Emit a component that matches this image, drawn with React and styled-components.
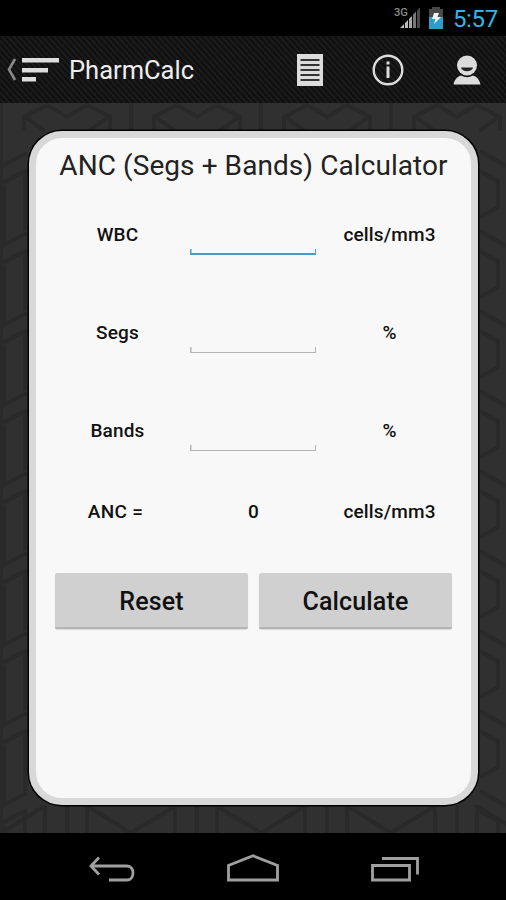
import React, { useState } from "react";
import styled, { createGlobalStyle } from "styled-components";

const colors = {
  holoBlue: "#33b5e5",
  icon: "#dcdcdc",
  nav: "#a0a0a0",
  text: "#111",
  card: "#f8f8f8",
  cardBorder: "#d8d8d8"
};

const GlobalStyle = createGlobalStyle`
  * {
    box-sizing: border-box;
  }
  body {
    margin: 0;
    background: #000;
    font-family: Roboto, "Liberation Sans", sans-serif;
  }
`;

const Screen = styled.div`
  display: flex;
  flex-direction: column;
  width: 506px;
  height: 900px;
  overflow: hidden;
  background: #000;
`;

const StatusBar = styled.div`
  display: flex;
  justify-content: flex-end;
  align-items: center;
  height: 36px;
  padding-right: 8px;
`;

const Clock = styled.span`
  margin-left: 9px;
  font-size: 24px;
  line-height: 36px;
  letter-spacing: -0.3px;
  padding-top: 1px;
  color: ${colors.holoBlue};
`;

const ActionBar = styled.header`
  display: flex;
  align-items: center;
  height: 67px;
  padding: 0 25px 0 5px;
  background: repeating-linear-gradient(
    48deg,
    #0f0f0f 0,
    #111 1.6px,
    #202020 3px,
    #0f0f0f 4.3px
  );
`;

const AppName = styled.h1`
  flex: 1;
  margin: 1px 0 0 10px;
  font-size: 25.5px;
  font-weight: 400;
  color: #eee;
`;

const Actions = styled.div`
  display: flex;
  gap: 49px;
`;

const Body = styled.main`
  position: relative;
  height: 730px;
  padding: 28px 28px 28px 29px;
  background: #303030;
`;

const Backdrop = styled.svg`
  position: absolute;
  top: 0;
  left: 0;
`;

const Card = styled.section`
  position: relative;
  height: 674px;
  padding: 0 13px;
  border: 7px solid ${colors.cardBorder};
  border-radius: 33px;
  background: ${colors.card};
  box-shadow: 0 0 0 1.5px #000;
  color: ${colors.text};
`;

const Title = styled.h2`
  margin: 0;
  height: 47px;
  line-height: 55px;
  text-align: center;
  white-space: nowrap;
  font-size: 28px;
  font-weight: 400;
  letter-spacing: 0.07px;
  color: #222;
`;

const Row = styled.div`
  display: grid;
  grid-template-columns: repeat(3, 136px);
  justify-content: center;
  align-items: center;
  justify-items: center;
  height: ${props => props.$height}px;
  font-size: 19px;
  font-weight: 500;
  letter-spacing: 0.15px;
`;

const ResultLabel = styled.span`
  margin-right: 4px;
  letter-spacing: 0.3px;
`;

const Field = styled.input`
  width: 126px;
  height: 40px;
  padding: 0 8px 6px;
  border: 0;
  outline: 0;
  font: inherit;
  text-align: center;
  background: linear-gradient(${props => props.$line}, ${props => props.$line}) 0
      100% / 100% ${props => props.$weight}px no-repeat,
    linear-gradient(${props => props.$line}, ${props => props.$line}) 0 100% /
      1.5px 6px no-repeat,
    linear-gradient(${props => props.$line}, ${props => props.$line}) 100% 100% /
      1.5px 6px no-repeat;
  margin: 2px 1px 0 0;
`;

const Buttons = styled.div`
  display: flex;
  justify-content: center;
  gap: 11px;
  margin-top: 30px;
`;

const Button = styled.button`
  width: 193px;
  height: 56px;
  padding: 2px 0 0;
  border: 0;
  border-bottom: 2px solid #b4b4b4;
  border-radius: 2px;
  background: #d0d0d0;
  box-shadow: 0 1px 1px rgba(0, 0, 0, 0.12);
  color: ${colors.text};
  font-family: inherit;
  font-size: 25px;
  font-weight: 500;
  letter-spacing: 0.15px;
`;

const NavBar = styled.nav`
  display: flex;
  justify-content: center;
  align-items: center;
  gap: 90px;
  height: 67px;
  padding: 4px 0 0 1px;
`;

const FIELDS = [
  { name: "WBC", unit: "cells/mm3" },
  { name: "Segs", unit: "%" },
  { name: "Bands", unit: "%" }
];

// Interlocking cubes showing round the edge of the card
function CubePattern() {
  const columns = [-63, 67, 197, 327, 457];
  const rows = [0, 80, 160, 240, 320, 400, 480, 560, 640];
  return (
    <Backdrop width="506" height="730" viewBox="0 0 506 730">
      <g fill="none" stroke="#292929" strokeWidth="4">
        {columns.map(x => (
          <g key={x}>
            <path
              d={`M${x - 43} 28V14L${x - 18} 1M${x + 18} 1L${x + 43} 14V28M${x -
                40} 15L${x - 22} 28M${x + 40} 15L${x + 22} 28M${x -
                18} 3L${x} 14L${x + 18} 3M${x + 64} 0V28`}
            />
            <path
              d={`M${x - 22} 702V730M${x} 702V730M${x + 20} 702V730M${x +
                20} 703L${x + 64} 730L${x + 108} 703`}
            />
          </g>
        ))}
        {rows.map(y => (
          <g key={y}>
            <path
              d={`M0 ${y + 64}L27 ${y + 50}M0 ${y + 81}L27 ${y + 67}M4 ${y +
                82}V${y + 140}M25 ${y + 70}V${y + 128}`}
            />
            <path
              d={`M480 ${y + 48}L506 ${y + 63}M480 ${y + 68}L498 ${y +
                78}V${y + 104}L480 ${y + 114}`}
            />
          </g>
        ))}
      </g>
      <rect width="3" height="730" fill="#2a2a2a" />
    </Backdrop>
  );
}

const SignalIcon = () => (
  <svg width="28" height="24" viewBox="0 0 28 24">
    <text x="0" y="10" fontSize="11" fontWeight="500" fill="#8c8c8c" textLength="14" lengthAdjust="spacingAndGlyphs">
      3G
    </text>
    <path d="M6 22L10 18V22Z M11 17L14 14V22H11Z" fill="#bbb" />
    <path d="M15 13L18 10V22H15Z" fill="#aaa" />
    <path d="M19 8.500L22 5.500V22H19Z" fill="#777" />
    <path d="M23 4.500L26 1.500V22H23Z" fill="#4a4a4a" />
  </svg>
);

const Battery = styled.svg`
  margin-left: 6px;
`;

const BatteryIcon = () => (
  <Battery width="16" height="24" viewBox="0 0 16 24">
    <path d="M4 1H12V3H15V12H1V3H4Z" fill="#484848" />
    <path d="M1 11H15V23H1Z" fill="#2b9fc8" />
    <path d="M6 7H11L9.500 11H13L6 18L7.500 13H4Z" fill="#f4f4f4" />
  </Battery>
);

const MenuIcon = () => (
  <svg width="54" height="30" viewBox="0 0 54 30">
    <path d="M10 4L4 14.500L10 25" fill="none" stroke="#8a8a8a" strokeWidth="2.6" />
    <path d="M17 3H54V7.500H17ZM17 13H43V17.500H17ZM17 22H31V26.500H17Z" fill="#ddd" />
  </svg>
);

const NotesIcon = () => (
  <svg width="26" height="32" viewBox="0 0 26 32">
    <path d="M0 0H26V32H0Z" fill={colors.icon} />
    <path
      d="M3.500 6H22.500M3.500 11H22.500M3.500 16H22.500M3.500 21H22.500M3.500 26H22.500"
      stroke="#333"
      strokeWidth="1.8"
    />
  </svg>
);

const InfoIcon = () => (
  <svg width="32" height="32" viewBox="0 0 32 32">
    <circle cx="16" cy="16" r="14.300" fill="none" stroke={colors.icon} strokeWidth="2.4" />
    <path d="M14.500 7.500H17.500V10.500H14.500ZM14.500 12.500H17.500V24H14.500Z" fill={colors.icon} />
  </svg>
);

const PersonIcon = () => (
  <svg width="28" height="32" viewBox="0 0 28 32">
    <circle cx="14" cy="11.500" r="10" fill={colors.icon} />
    <path d="M8 13.500H20C19 18.500 9 18.500 8 13.500Z" fill="#222" />
    <path d="M0.500 30.500C1.500 25 5 22.500 8 21.500Q14 25 20 21.500C23 22.500 26.500 25 27.500 30.500Z" fill={colors.icon} />
  </svg>
);

const BackIcon = () => (
  <svg width="48" height="30" viewBox="0 0 48 30">
    <path
      d="M11 3.500L3 12L11 20.500M3 12H39C47 12 47 26 39 26H21"
      fill="none"
      stroke={colors.nav}
      strokeWidth="2.8"
    />
  </svg>
);

const HomeIcon = () => (
  <svg width="54" height="30" viewBox="0 0 54 30">
    <path
      d="M2.500 26V11.500L27 1.800L51.500 11.500V26Z"
      fill="none"
      stroke={colors.nav}
      strokeWidth="2.8"
    />
  </svg>
);

const RecentIcon = () => (
  <svg width="50" height="30" viewBox="0 0 50 30">
    <path
      d="M2.500 11.500H39.500V26H2.500ZM12 4.500H47.500V20.500"
      fill="none"
      stroke={colors.nav}
      strokeWidth="2.8"
    />
  </svg>
);

function App() {
  const [values, setValues] = useState({ WBC: "", Segs: "", Bands: "" });
  const [focused, setFocused] = useState("WBC");
  const [result, setResult] = useState(0);

  const handleChange = name => event => {
    setValues({ ...values, [name]: event.target.value });
  };

  function handleReset() {
    setValues({ WBC: "", Segs: "", Bands: "" });
    setResult(0);
  }

  function handleCalculate() {
    const percent = Number(values.Segs) + Number(values.Bands);
    setResult(Math.round((Number(values.WBC) * percent) / 100) || 0);
  }

  return (
    <Screen>
      <GlobalStyle />
      <StatusBar>
        <SignalIcon />
        <BatteryIcon />
        <Clock>5:57</Clock>
      </StatusBar>
      <ActionBar>
        <MenuIcon />
        <AppName>PharmCalc</AppName>
        <Actions>
          <NotesIcon />
          <InfoIcon />
          <PersonIcon />
        </Actions>
      </ActionBar>
      <Body>
        <CubePattern />
        <Card>
          <Title>ANC (Segs + Bands) Calculator</Title>
          {FIELDS.map(({ name, unit }) => (
            <Row key={name} $height={98}>
              <span>{name}</span>
              <Field
                aria-label={name}
                value={values[name]}
                onChange={handleChange(name)}
                onFocus={() => setFocused(name)}
                $line={focused === name ? "#4a9cc9" : "#b5b5b5"}
                $weight={focused === name ? 2.5 : 1.5}
              />
              <span>{unit}</span>
            </Row>
          ))}
          <Row $height={64}>
            <ResultLabel>ANC =</ResultLabel>
            <span>{result}</span>
            <span>cells/mm3</span>
          </Row>
          <Buttons>
            <Button onClick={handleReset}>Reset</Button>
            <Button onClick={handleCalculate}>Calculate</Button>
          </Buttons>
        </Card>
      </Body>
      <NavBar>
        <BackIcon />
        <HomeIcon />
        <RecentIcon />
      </NavBar>
    </Screen>
  );
}

export default App;
